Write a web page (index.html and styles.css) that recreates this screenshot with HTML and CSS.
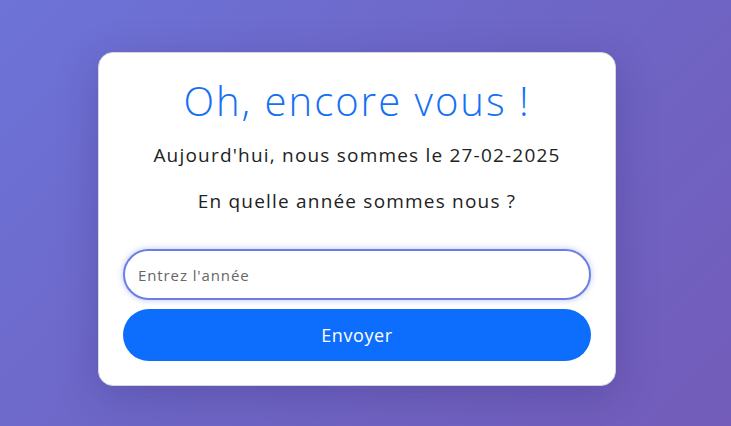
FILE: index.html
```html
<!DOCTYPE html>
<html lang="fr">
<head>
<meta charset="utf-8">
<link rel="stylesheet" href="styles.css">
</head>
<body>
<main class="card">
  <h1 class="title">Oh, encore vous !</h1>
  <p class="date">Aujourd'hui, nous sommes le 27-02-2025</p>
  <p class="question">En quelle année sommes nous ?</p>
  <form class="form">
    <input class="year" type="text" placeholder="Entrez l'année">
    <button class="send" type="button">Envoyer</button>
  </form>
</main>
</body>
</html>
```
FILE: styles.css
```css
html, body {
  margin: 0;
  height: 100%;
}
body {
  background: linear-gradient(135deg, #6d73d8 0%, #6e66c6 50%, #735cba 100%);
  font-family: "Open Sans", "Noto Sans", sans-serif;
  padding: 52px 0 0 98px;
  box-sizing: border-box;
}
.card {
  width: 518px;
  height: 334px;
  box-sizing: border-box;
  background: #fff;
  border: 1px solid #d6d6dc;
  border-radius: 15px;
  padding: 24px 24px 0 24px;
  box-shadow: 0 10px 40px rgba(40, 30, 100, 0.25);
  text-align: center;
}
.title {
  margin: 0;
  font-weight: 300;
  font-size: 40px;
  line-height: 48px;
  letter-spacing: 2px;
  color: #1470f5;
}
.date {
  margin: 18px 0 0;
  font-size: 19px;
  line-height: 24px;
  letter-spacing: 1.2px;
  color: #222;
}
.question {
  margin: 22px 0 0;
  font-size: 19px;
  line-height: 24px;
  letter-spacing: 1.2px;
  color: #222;
}
.form {
  margin-top: 36px;
  display: flex;
  flex-direction: column;
  gap: 9px;
}
.year {
  height: 51px;
  box-sizing: border-box;
  border: 2px solid #6a7ee4;
  border-radius: 26px;
  padding: 0 13px;
  font-family: inherit;
  font-size: 15px;
  letter-spacing: 0.9px;
  color: #333;
  outline: none;
  box-shadow: 0 0 6px rgba(106, 126, 228, 0.45);
}
.year::placeholder {
  color: #666;
}
.send {
  height: 52px;
  border: none;
  border-radius: 26px;
  background: #0d6efd;
  color: #fff;
  font-family: inherit;
  font-size: 18px;
  letter-spacing: 0.6px;
}
```
